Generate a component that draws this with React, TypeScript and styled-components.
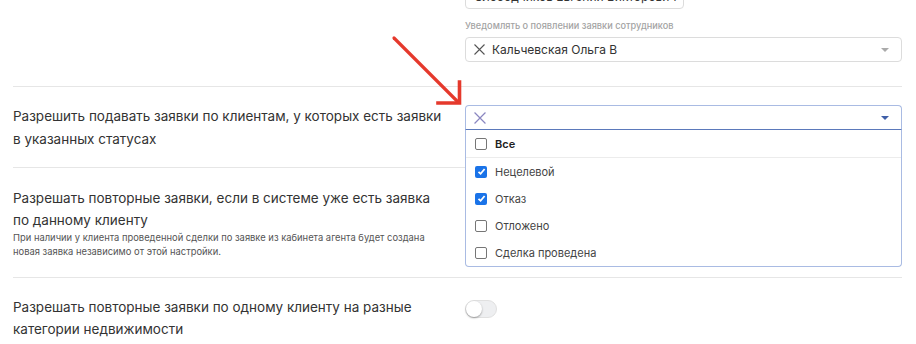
import React from "react";
import styled, { createGlobalStyle } from "styled-components";

const GlobalStyle = createGlobalStyle`
  html, body {
    margin: 0;
    padding: 0;
    background: #fff;
    overflow: hidden;
  }
  body {
    font-family: Inter, "Noto Sans", sans-serif;
    color: #333;
  }
`;

const Page = styled.div`
  position: relative;
  width: 916px;
  height: 344px;
  overflow: hidden;
`;

const Scroller = styled.div`
  margin-top: -16px;
  padding: 0 14px 0 13px;
`;

const Row = styled.div<{ $pt?: number; $pb?: number }>`
  display: flex;
  align-items: flex-start;
  padding: ${p => p.$pt ?? 18}px 0 ${p => p.$pb ?? 16}px;
  border-bottom: 1px solid #e6e6e6;
  &:last-child {
    border-bottom: none;
  }
`;

const LeftCol = styled.div`
  width: 452px;
  flex: none;
`;

const RightCol = styled.div`
  flex: 1;
  position: relative;
`;

const Title = styled.div<{ $lh?: number }>`
  font-size: 13.5px;
  line-height: ${p => p.$lh ?? 23}px;
  color: #333;
  white-space: nowrap;
`;

const Hint = styled.div`
  font-size: 9.4px;
  line-height: 14px;
  color: #555;
  white-space: nowrap;
`;

const Field = styled.div<{ $w?: number }>`
  box-sizing: border-box;
  width: ${p => (p.$w ? `${p.$w}px` : "100%")};
  height: 25px;
  border: 1px solid #dcdcdc;
  border-radius: 4px;
  display: flex;
  align-items: center;
  padding: 0 10px 0 8px;
  font-size: 12px;
  color: #333;
  background: #fff;
  overflow: hidden;
  white-space: nowrap;
`;

const FieldText = styled.span`
  flex: 1;
  margin-left: 7px;
`;

const Label = styled.div`
  font-size: 9.2px;
  font-weight: 500;
  color: #a3a3a3;
  margin: 11px 0 6px;
`;

const Caret = styled.span<{ $color: string }>`
  width: 0;
  height: 0;
  border-left: 4px solid transparent;
  border-right: 4px solid transparent;
  border-top: 4px solid ${p => p.$color};
  margin-right: 2px;
`;

const OpenSelect = styled.div`
  box-sizing: border-box;
  height: 25px;
  border: 1px solid #a9bbe3;
  border-bottom: 1px solid #5b79bb;
  border-radius: 4px 4px 0 0;
  display: flex;
  align-items: center;
  justify-content: space-between;
  padding: 0 10px 0 8px;
`;

const Menu = styled.div`
  position: absolute;
  top: 25px;
  left: 0;
  right: 0;
  box-sizing: border-box;
  background: #fff;
  border: 1px solid #a9bbe3;
  border-top: none;
  border-radius: 0 0 4px 4px;
  z-index: 5;
`;

const Option = styled.label<{ $bold?: boolean; $divider?: boolean }>`
  display: flex;
  align-items: center;
  gap: 8px;
  height: 27px;
  padding-left: 9px;
  font-size: 11px;
  font-weight: ${p => (p.$bold ? 600 : 400)};
  color: ${p => (p.$bold ? "#222" : "#444")};
  border-bottom: ${p => (p.$divider ? "1px solid #ececec" : "none")};
`;

const Box = styled.span<{ $checked?: boolean }>`
  box-sizing: border-box;
  width: 12px;
  height: 12px;
  border-radius: 2px;
  border: ${p => (p.$checked ? "none" : "1px solid #767676")};
  background: ${p => (p.$checked ? "#1a73e8" : "#fff")};
  display: flex;
  align-items: center;
  justify-content: center;
`;

const Toggle = styled.span`
  display: block;
  position: relative;
  box-sizing: border-box;
  width: 32px;
  height: 18px;
  border-radius: 9px;
  background: #eeeff1;
  border: 1px solid #e0e0e0;
  margin-top: 4px;
  &::after {
    content: "";
    position: absolute;
    left: 0;
    top: 0;
    width: 16px;
    height: 16px;
    border-radius: 50%;
    background: #fff;
    box-shadow: 0 1px 2px rgba(0, 0, 0, 0.35);
  }
`;

const Arrow = styled.svg`
  position: absolute;
  left: 390px;
  top: 34px;
  z-index: 10;
`;

const Cross = ({ color, size = 11 }: { color: string; size?: number }) => (
  <svg width={size} height={size} viewBox="0 0 11 11">
    <path d="M0.5 0.5L10.5 10.5M10.5 0.5L0.5 10.5" stroke={color} strokeWidth="1.1" />
  </svg>
);

const Check = () => (
  <svg width="9" height="9" viewBox="0 0 9 9">
    <path d="M1.5 4.8L3.6 6.8L7.6 2" stroke="#fff" strokeWidth="1.8" fill="none" />
  </svg>
);

const options = [
  { label: "Нецелевой", checked: true },
  { label: "Отказ", checked: true },
  { label: "Отложено", checked: false },
  { label: "Сделка проведена", checked: false },
];

export default function App() {
  return (
    <Page>
      <GlobalStyle />
      <Scroller>
        <Row $pt={0} $pb={24}>
          <LeftCol />
          <RightCol>
            <Field $w={219}>
              <span>Слободчиков Евгений Викторович</span>
            </Field>
            <Label>Уведомлять о появлении заявки сотрудников</Label>
            <Field>
              <Cross color="#555" />
              <FieldText>Кальчевская Ольга В</FieldText>
              <Caret $color="#aaa" />
            </Field>
          </RightCol>
        </Row>
        <Row $pt={18} $pb={16}>
          <LeftCol>
            <Title>
              Разрешить подавать заявки по клиентам, у которых есть заявки
              <br />в указанных статусах
            </Title>
          </LeftCol>
          <RightCol>
            <OpenSelect>
              <Cross color="#8a86c0" size={12} />
              <Caret $color="#3f5fa8" />
            </OpenSelect>
            <Menu>
              <Option $bold $divider>
                <Box />
                Все
              </Option>
              {options.map(o => (
                <Option key={o.label}>
                  <Box $checked={o.checked}>{o.checked ? <Check /> : null}</Box>
                  {o.label}
                </Option>
              ))}
            </Menu>
          </RightCol>
        </Row>
        <Row $pt={19} $pb={18}>
          <LeftCol>
            <Title $lh={22}>
              Разрешать повторные заявки, если в системе уже есть заявка
              <br />
              по данному клиенту
            </Title>
            <Hint>
              При наличии у клиента проведенной сделки по заявке из кабинета агента будет создана
              <br />
              новая заявка независимо от этой настройки.
            </Hint>
          </LeftCol>
          <RightCol />
        </Row>
        <Row $pt={18} $pb={0}>
          <LeftCol>
            <Title $lh={22}>
              Разрешать повторные заявки по одному клиенту на разные
              <br />
              категории недвижимости
            </Title>
          </LeftCol>
          <RightCol>
            <Toggle />
          </RightCol>
        </Row>
      </Scroller>
      <Arrow width="76" height="76" viewBox="0 0 76 76">
        <path d="M4 4L68 68" stroke="#e5392c" strokeWidth="3.2" strokeLinecap="round" />
        <path d="M48 69H69.5V48" stroke="#e5392c" strokeWidth="3.6" fill="none" strokeLinecap="square" />
      </Arrow>
    </Page>
  );
}
